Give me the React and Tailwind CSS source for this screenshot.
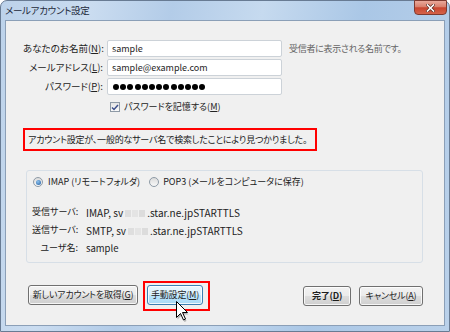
const btnBase =
  "h-[20px] flex items-center justify-center whitespace-nowrap rounded-[3px] text-[9px] tracking-[-0.2px] text-[#1e1e1e] shadow-[inset_0_0_0_1px_rgba(255,255,255,0.8)]";
const btnNormal =
  "border border-[#707070] bg-[linear-gradient(to_bottom,#f2f2f2_0%,#ebebeb_50%,#dddddd_51%,#cfcfcf_100%)]";
const btnHover =
  "border border-[#3c7fb1] bg-[linear-gradient(to_bottom,#eaf6fd_0%,#d9f0fc_50%,#bee6fd_51%,#a7d9f5_100%)]";

function U({ children }) {
  return <span className="underline underline-offset-[1px]">{children}</span>;
}

function Field({ children }) {
  return (
    <div className="h-[17px] w-[175px] bg-white border border-[#ccd2d8] rounded-[2px] flex items-center pl-[4px] text-[9px] tracking-normal text-[#1e1e1e]">
      {children}
    </div>
  );
}

function Radio({ checked }) {
  return (
    <span className="w-[10px] h-[10px] rounded-full border border-[#8e9aa6] bg-[linear-gradient(to_bottom,#dcdcdc,#f8f8f8)] flex items-center justify-center shrink-0">
      {checked && <span className="w-[5px] h-[5px] rounded-full bg-[radial-gradient(circle_at_40%_35%,#8fc3ee,#1d5aa0)]" />}
    </span>
  );
}

function Hidden() {
  return (
    <span className="inline-flex gap-[1px] mx-[2px] align-middle">
      <span className="w-[6px] h-[7px] bg-[#dedede]" />
      <span className="w-[6px] h-[7px] bg-[#e4e4e4]" />
      <span className="w-[6px] h-[7px] bg-[#dcdcdc]" />
    </span>
  );
}

function Cursor() {
  return (
    <svg className="absolute left-[31px] top-[18px]" width="14" height="22" viewBox="0 0 14 22">
      <path d="M1.5 2.5 L1.5 18.5 L5.5 14.5 L8.5 21 L10.5 20 L7.5 13.5 L12.5 13.5 Z" fill="#000" opacity="0.25" />
      <path d="M0.5 0.5 L0.5 16.5 L4.5 12.5 L7.5 19 L9.5 18 L6.5 11.5 L11.5 11.5 Z" fill="#fff" stroke="#000" strokeWidth="1" strokeLinejoin="miter" />
    </svg>
  );
}

export default function App() {
  return (
    <div className="w-[450px] h-[332px] overflow-hidden bg-white whitespace-nowrap font-['Noto_Sans_CJK_JP',sans-serif] [font-feature-settings:'palt']">
      <div className="h-full flex flex-col rounded-t-[7px] border border-[#687b93] bg-[linear-gradient(100deg,#bcd2ea_0%,#cadcf0_18%,#b3cce8_34%,#c6daef_52%,#aac7e6_72%,#bad1ea_100%)]">
        {/* title bar */}
        <div className="h-[19px] flex items-start justify-between">
          <span className="pl-[4px] pt-[2px] text-[9.5px] tracking-[-0.3px] leading-[14px] text-[#1e2a3a]">メールアカウント設定</span>
          <div className="mr-[2px] -mt-[1px] w-[33px] h-[15px] rounded-b-[4px] border border-[#7e3a30] bg-[linear-gradient(to_bottom,#e9a99b_0%,#d9806d_45%,#c8452f_52%,#d4634a_100%)] flex items-center justify-center">
            <svg width="9" height="8" viewBox="0 0 9 8">
              <path d="M1.5 1 L7.5 7 M7.5 1 L1.5 7" stroke="#5a2a22" strokeWidth="3" strokeLinecap="square" />
              <path d="M1.5 1 L7.5 7 M7.5 1 L1.5 7" stroke="#fff" strokeWidth="1.6" strokeLinecap="square" />
            </svg>
          </div>
        </div>

        {/* client area */}
        <div className="flex-1 px-[4px] pb-[5px] flex">
          <div className="flex-1 border border-[#8b9fb7] bg-[#f0f0f0] flex flex-col pl-[17px] pr-[21px] text-[9px] text-[#222]">
            {/* form */}
            <div className="mt-[19px] grid grid-cols-[80px_175px_1fr] gap-x-[4px] gap-y-[2px] items-center">
              <span className="text-right text-[9.5px]">あなたのお名前(<U>N</U>):</span>
              <Field>sample</Field>
              <span className="pl-[3px] tracking-[-0.3px] text-[#666]">受信者に表示される名前です。</span>

              <span className="text-right text-[9.5px]">メールアドレス(<U>L</U>):</span>
              <Field>sample@example.com</Field>
              <span />

              <span className="text-right text-[9.5px]">パスワード(<U>P</U>):</span>
              <Field>
                <span className="flex gap-[1.2px] pl-[1px]">
                  {Array.from({ length: 13 }).map((_, i) => (
                    <span key={i} className="w-[6px] h-[6px] rounded-full bg-black" />
                  ))}
                </span>
              </Field>
              <span />
            </div>

            <div className="mt-[6px] ml-[87px] h-[12px] flex items-center gap-[4px]">
              <span className="w-[10px] h-[10px] border border-[#8e9aa6] bg-[linear-gradient(to_bottom,#e4e4e4,#fafafa)] flex items-center justify-center">
                <svg width="8" height="7" viewBox="0 0 8 7">
                  <path d="M1 3.5 L3 5.5 L7 1" stroke="#3c4f8a" strokeWidth="1.5" fill="none" />
                </svg>
              </span>
              <span>パスワードを記憶する(<U>M</U>)</span>
            </div>

            {/* notice */}
            <div className="mt-[15px] w-[294px] h-[23px] border-2 border-[#ff0000] flex items-center pl-[3px] tracking-[-0.2px]">
              アカウント設定が、一般的なサーバ名で検索したことにより見つかりました。
            </div>

            {/* group box */}
            <div className="mt-[19px] ml-[3px] w-[397px] h-[93px] border border-[#d7dfe7] rounded-[3px] pt-[4px] flex flex-col">
              <div className="h-[14px] pl-[6px] flex items-center">
                <Radio checked />
                <span className="ml-[5px]">IMAP (リモートフォルダ)</span>
                <span className="ml-[9px]"><Radio /></span>
                <span className="ml-[4px]">POP3 (メールをコンピュータに保存)</span>
              </div>
              <div className="mt-[14px] pl-[5px] grid grid-cols-[46px_1fr] gap-x-[8px] auto-rows-[18px] items-center">
                <span className="text-right">受信サーバ:</span>
                <span className="text-[10px]">IMAP, sv<Hidden />.star.ne.jpSTARTTLS</span>
                <span className="text-right">送信サーバ:</span>
                <span className="text-[10px]">SMTP, sv<Hidden />.star.ne.jpSTARTTLS</span>
                <span className="text-right">ユーザ名:</span>
                <span className="text-[9.5px]">sample</span>
              </div>
            </div>

            {/* buttons */}
            <div className="mt-[18px] flex items-start">
              <button className={`${btnBase} ${btnNormal} mt-[4px] ml-[5px] w-[110px]`}>
                新しいアカウントを取得(<U>G</U>)
              </button>
              <div className="relative ml-[5px] border-2 border-[#ff0000] pl-[2px] pr-[5px] pt-[2px] pb-[4px]">
                <button className={`${btnBase} ${btnHover} w-[56px]`}>
                  手動設定(<U>M</U>)
                </button>
                <Cursor />
              </div>
              <div className="flex-1" />
              <button className={`${btnBase} ${btnNormal} mt-[5px] w-[48px] font-semibold`}>
                完了(<U>D</U>)
              </button>
              <button className={`${btnBase} ${btnNormal} mt-[5px] ml-[8px] w-[64px]`}>
                キャンセル(<U>A</U>)
              </button>
            </div>
          </div>
        </div>
      </div>
    </div>
  );
}
